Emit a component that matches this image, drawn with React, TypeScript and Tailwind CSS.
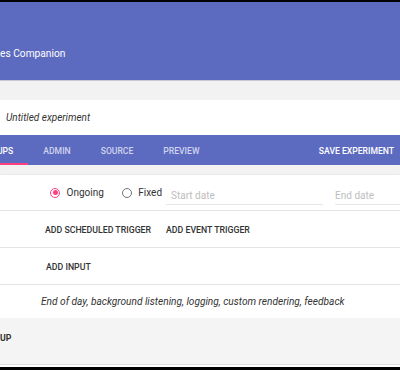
import React from "react";

function Radio({ checked }: { checked: boolean }) {
  return (
    <span
      className={
        "flex h-[10px] w-[10px] items-center justify-center rounded-full border-[1.5px] " +
        (checked ? "border-[#ff4081]" : "border-[#757575]")
      }
    >
      {checked ? <span className="h-[5px] w-[5px] rounded-full bg-[#ff4081]" /> : null}
    </span>
  );
}

export default function App() {
  return (
    <div
      className="flex h-[370px] w-[400px] flex-col overflow-hidden bg-[#f4f4f4]"
      style={{ fontFamily: "Roboto, 'Liberation Sans', sans-serif" }}
    >
      <div className="h-[2px] shrink-0 bg-black" />
      <div className="flex h-[78px] shrink-0 flex-col justify-end bg-[#5c6bc0] pb-[16px]">
        <div className="text-[10.2px] leading-[20px] text-white">es Companion</div>
      </div>
      <div className="h-px shrink-0 bg-[#c9c9d4]" />
      <div className="h-[19px] shrink-0 bg-[#f2f2f2]" />
      <div className="flex h-[35px] shrink-0 items-center bg-white pl-[6px]">
        <span className="text-[10px] italic text-[#333]">Untitled experiment</span>
      </div>
      <div className="flex h-[30px] shrink-0 items-stretch overflow-hidden bg-[#5c6bc0] pt-[2px] text-[8.6px] font-medium">
        <div className="relative -ml-[3px] flex items-center pr-[15px] text-white">
          UPS
          <span className="absolute bottom-0 left-0 right-0 h-[2px] bg-[#ff4081]" />
        </div>
        <div className="flex items-center px-[15px] text-[#d0d4ee]">ADMIN</div>
        <div className="flex items-center px-[15px] text-[#d0d4ee]">SOURCE</div>
        <div className="flex items-center px-[15px] text-[#d0d4ee]">PREVIEW</div>
        <div className="ml-auto flex items-center pr-[6px] text-white">SAVE EXPERIMENT</div>
      </div>
      <div className="h-[10px] shrink-0 bg-[#f2f2f2]" />
      <div className="flex shrink-0 flex-col bg-white shadow-[0_1px_3px_rgba(0,0,0,0.2)]">
        <div className="flex h-[35px] items-center pl-[50px] text-[10px]">
          <Radio checked />
          <span className="ml-[6.5px] text-[#333]">Ongoing</span>
          <span className="ml-[18px]">
            <Radio checked={false} />
          </span>
          <span className="ml-[6.5px] text-[#333]">Fixed</span>
          <div className="mb-[5px] ml-[4px] flex h-[26px] w-[157px] items-end self-end border-b border-[#e6e6e6] pb-px pl-[5px]">
            <span className="text-[#bdbdbd]">Start date</span>
          </div>
          <div className="mb-[5px] ml-[12px] flex h-[26px] flex-1 items-end self-end border-b border-[#e6e6e6] pb-px">
            <span className="text-[#bdbdbd]">End date</span>
          </div>
        </div>
        <div className="h-px bg-[#e3e3e3]" />
        <div className="flex h-[36px] items-center pl-[45px] pt-[3px] text-[8.75px] font-medium text-[#333]">
          <span>ADD SCHEDULED TRIGGER</span>
          <span className="ml-[15px]">ADD EVENT TRIGGER</span>
        </div>
        <div className="h-px bg-[#e3e3e3]" />
        <div className="flex h-[36px] items-center pl-[46px] pt-[3px] text-[8.75px] font-medium text-[#333]">
          <span>ADD INPUT</span>
        </div>
        <div className="h-px bg-[#e3e3e3]" />
        <div className="flex h-[33px] items-center pl-[41px] text-[10.15px] italic text-[#333]">
          End of day, background listening, logging, custom rendering, feedback
        </div>
      </div>
      <div className="flex h-[46px] shrink-0 items-center bg-[#f4f4f4] pb-[4px] text-[8.75px] font-bold text-[#333]">
        UP
      </div>
      <div className="h-px shrink-0 bg-[#dcdcdc]" />
      <div className="h-[2px] shrink-0 bg-white" />
      <div className="flex-1 bg-black" />
    </div>
  );
}
